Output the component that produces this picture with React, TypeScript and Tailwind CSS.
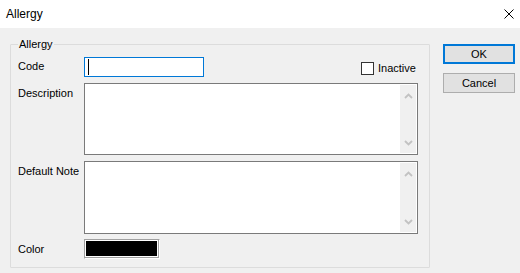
import React from 'react';

const ScrollArrows = () => (
  <div className="flex h-full w-[16px] flex-col items-center justify-between bg-[#f0f0f0] pt-[8px] pb-[7px]">
    <svg width="9" height="6" viewBox="0 0 9 6">
      <path d="M1 5 L4.5 1.5 L8 5" fill="none" stroke="#c2c2c2" strokeWidth="1.8" />
    </svg>
    <svg width="9" height="6" viewBox="0 0 9 6">
      <path d="M1 1 L4.5 4.5 L8 1" fill="none" stroke="#c2c2c2" strokeWidth="1.8" />
    </svg>
  </div>
);

const MemoBox = ({ height }: { height: string }) => (
  <div className={`flex w-[334px] ${height} justify-end border border-[#7a7a7a] bg-white p-px`}>
    <ScrollArrows />
  </div>
);

export default function App() {
  return (
    <div className="h-[273px] w-[520px] overflow-hidden bg-[#f0f0f0] text-[11px] leading-[16px] text-black" style={{ fontFamily: '"Liberation Sans", Arial, sans-serif' }}>
      {/* Title bar */}
      <div className="flex h-[28px] items-center justify-between bg-white pl-[6px] pr-[6px] text-[12px]">
        <span>Allergy</span>
        <svg width="10" height="10" viewBox="0 0 10 10">
          <path d="M0.5 0.5 L9.5 9.5 M9.5 0.5 L0.5 9.5" stroke="#000" strokeWidth="1" />
        </svg>
      </div>

      <div className="flex pl-[10px]">
        {/* Group box */}
        <fieldset className="mt-[8px] h-[232px] w-[420px] rounded-[1px] border border-[#dcdcdc] pl-[7px] pr-[11px]">
          <legend className="px-[1px]">Allergy</legend>

          <div className="mt-[5px] flex items-start">
            <span className="w-[66px] whitespace-nowrap pt-[1px]">Code</span>
            <div className="h-[20px] w-[120px] border border-[#0078d7] bg-white pl-[3px] pt-[1px]">
              <div className="h-[16px] w-px bg-black" />
            </div>
            <label className="ml-[157px] mt-[3px] flex items-center gap-[4px]">
              <span className="h-[13px] w-[13px] border border-[#333] bg-white" />
              <span>Inactive</span>
            </label>
          </div>

          <div className="mt-[6px] flex items-start">
            <span className="w-[66px] whitespace-nowrap pt-[2px]">Description</span>
            <MemoBox height="h-[72px]" />
          </div>

          <div className="mt-[6px] flex items-start">
            <span className="w-[66px] whitespace-nowrap pt-[2px]">Default Note</span>
            <MemoBox height="h-[73px]" />
          </div>

          <div className="mt-[5px] flex items-center">
            <span className="w-[66px] whitespace-nowrap">Color</span>
            <div className="h-[20px] w-[76px] border border-t-[#a0a0a0] border-l-[#a0a0a0] border-r-white border-b-white">
              <div className="h-full w-full border-r border-b border-[#a0a0a0]">
                <div className="h-full w-full border border-white bg-black" />
              </div>
            </div>
          </div>
        </fieldset>

        {/* Buttons */}
        <div className="ml-[13px] mt-[16px] flex flex-col gap-[9px]">
          <button className="flex h-[20px] w-[72px] items-center justify-center border-2 border-[#0078d7] bg-[#e1e1e1]">OK</button>
          <button className="flex h-[20px] w-[72px] items-center justify-center border border-[#adadad] bg-[#e1e1e1]">Cancel</button>
        </div>
      </div>
    </div>
  );
}
